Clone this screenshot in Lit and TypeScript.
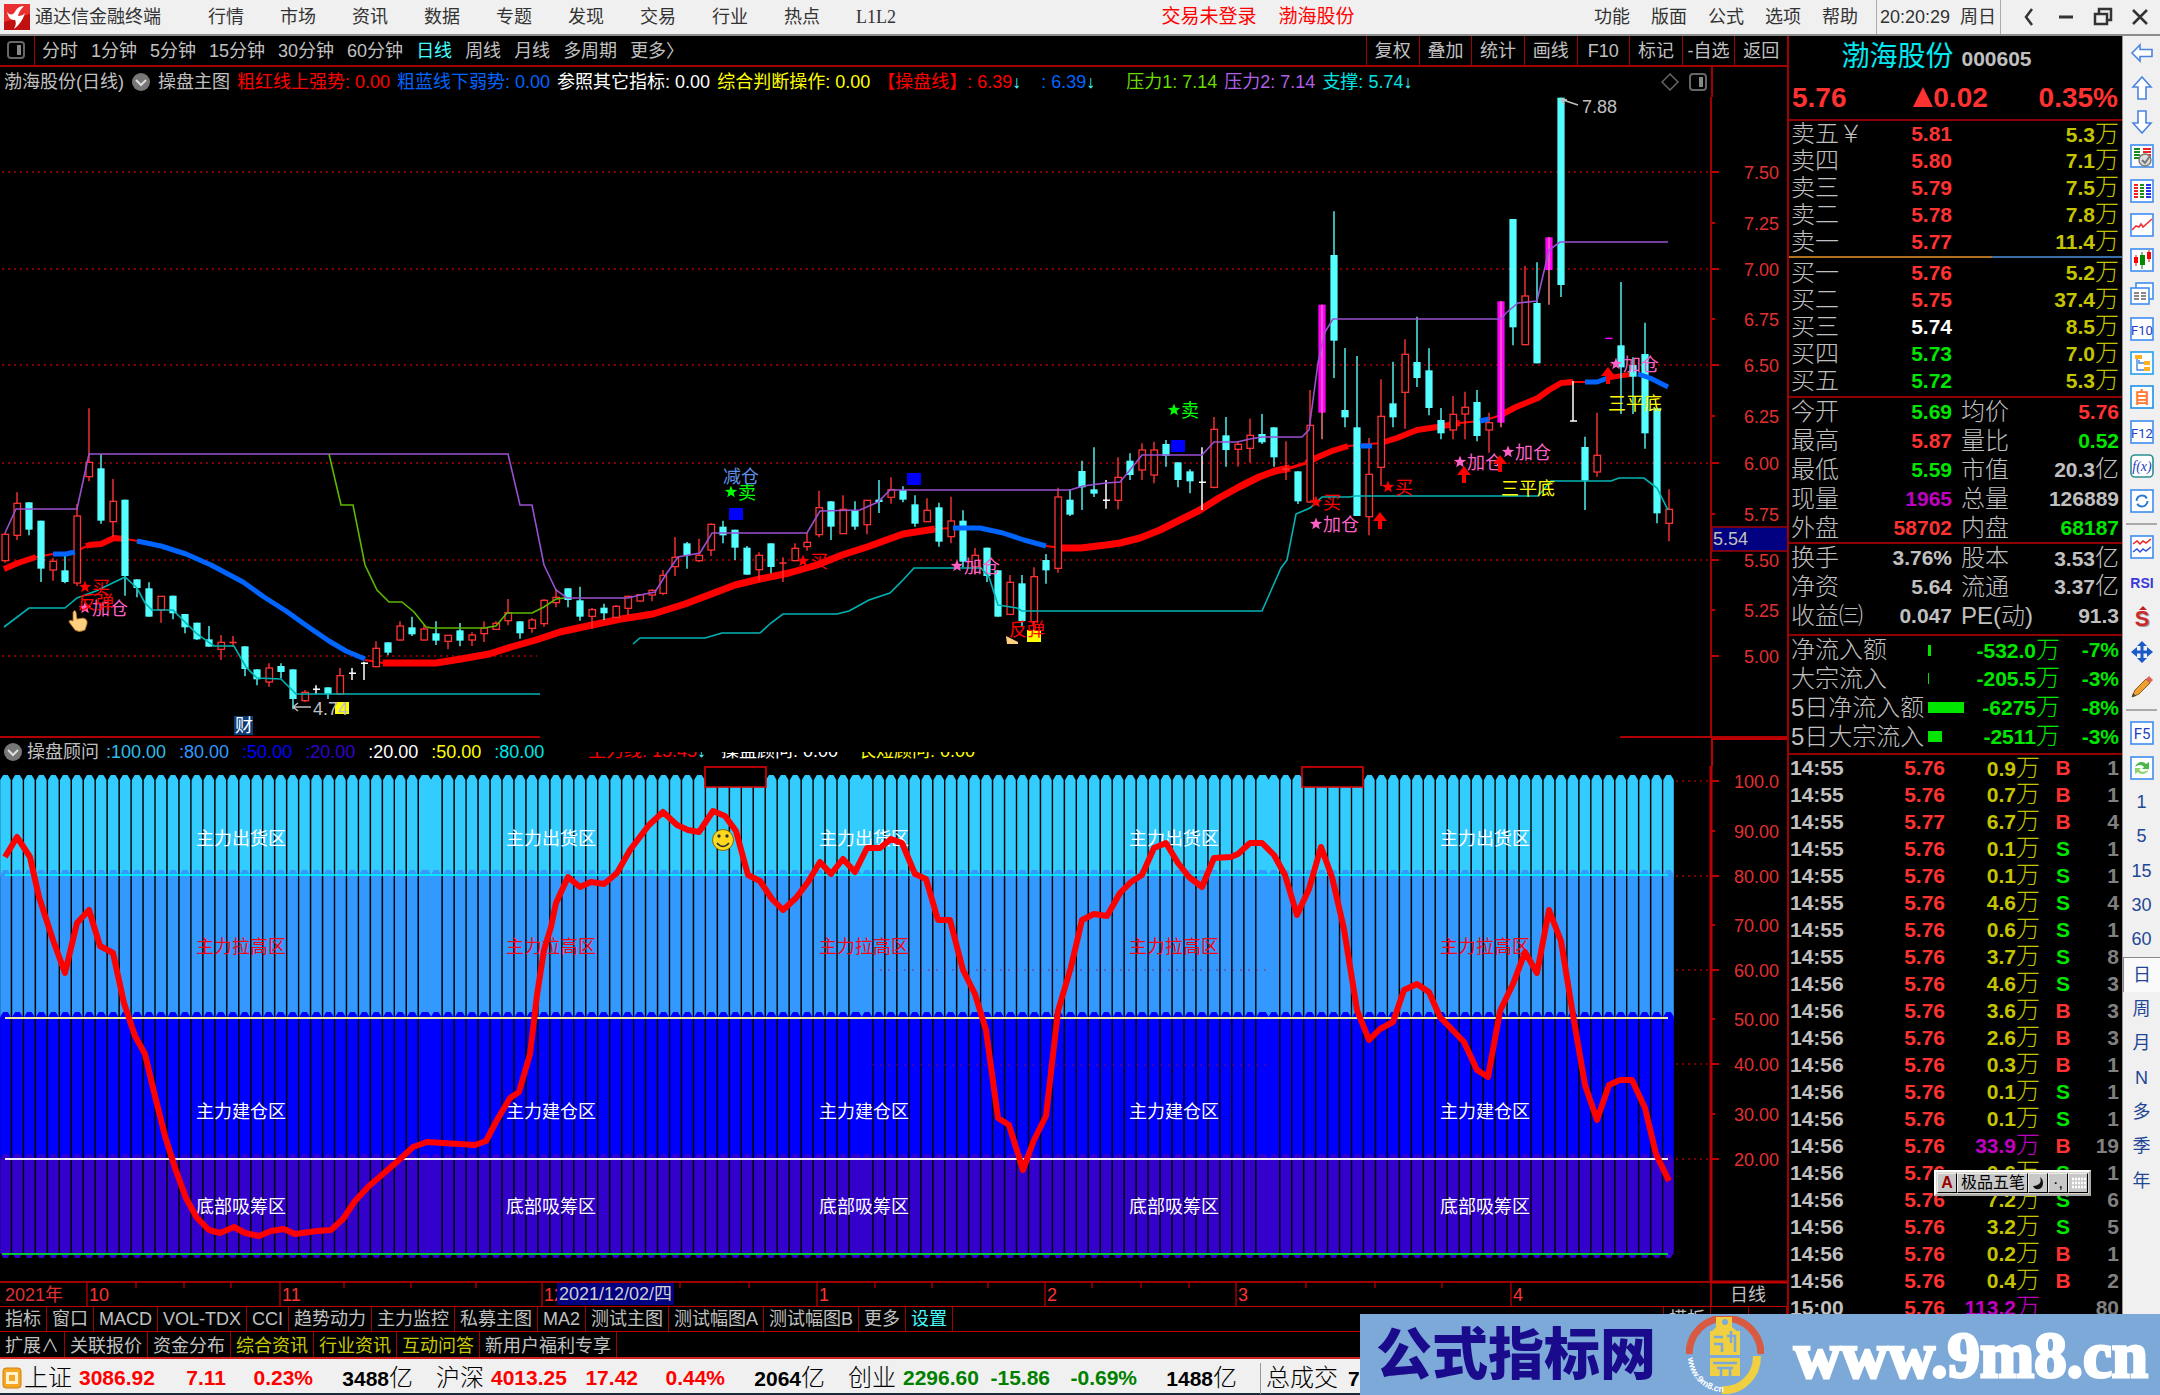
import { LitElement, html, svg, css, nothing } from "lit";
import { customElement, state } from "lit/decorators.js";
import { classMap } from "lit/directives/class-map.js";
import { styleMap } from "lit/directives/style-map.js";

type Bar = [kind: string, open: number, close: number, high: number, low: number];

const BAR0 = 5.4;
const PITCH = 11.965;
const barX = (i: number) => BAR0 + i * PITCH;

/** Parses "kind open close high low; ..." rows; values are thirds of a unit below `top`. */
function parseBars(top: number, text: string): Bar[] {
  return text.split(";").map((row) => {
    const [kind, ...rest] = row.trim().split(" ");
    const n = rest.map((v) => top + Number(v) / 3);
    return [kind, n[0], n[1], n[2], n[3]] as Bar;
  });
}

const BARS: Bar[] = [
  ...parseBars(380, `r 463 542 458 548;r 370 466 337 480;c 367 449 367 466;c 422 566 422 606;r 544 570 534 602;c 571 606 526 610;
    r 408 609 372 618;r 247 290 85 304;c 265 422 222 431;r 364 425 297 470;c 359 588 359 647;c 598 624 598 652;c 625 710 607 710;
    r 649 690 649 728;c 647 700 647 718;c 702 742 702 760;c 728 778 728 780;c 778 800 738 800;r 787 808 765 840;x 785 790 768 800;
    c 799 867 799 889;c 868 898 868 916;r 864 906 850 920;c 858 876 850 895;c 868 957 868 988;r 937 962 930 966;w 928 928 916 942;
    c 922 942 922 957;r 887 942 864 942;w 880 880 864 900;w 850 850 845 900;r 805 860 784 862;c 787 818 787 826;r 738 780 724 782;
    c 742 763 710 768;r 747 780 735 782;c 760 782 724 795;r 766 784 766 808;c 751 782 729 799;r 765 780 757 798;r 744 761 724 786;
    r 730 748 724 750;r 698 722 657 736;c 724 760 724 776;r 720 745 714 758;r 661 731 657 740;r 652 668 626 682`),
  ...parseBars(400, `c 565 600 565 622;c 601 650 560 662;r 629 649 624 686;c 623 640 611 660;r 619 652 615 654;r 589 625 587 645;
    r 584 603 582 605;r 571 585 568 604;r 526 580 510 586;r 472 500 411 528;c 430 466 426 506;r 466 482 416 486;r 373 450 370 468;
    c 380 406 362 430;c 389 443 389 480;c 443 524 438 524;r 466 509 457 542;c 430 501 430 520;x 487 490 472 546;r 445 482 430 484;
    r 427 440 398 452;r 323 404 272 412;c 304 380 304 420;r 328 401 286 402;c 331 380 304 389;r 301 374 300 403;c 299 306 240 339;
    r 269 292 232 311;c 270 299 259 307;c 313 371 286 380;r 331 365 295 366;c 322 425 308 440;r 363 410 290 430;c 362 485 331 502;
    r 466 500 444 522;c 443 528 443 546;c 511 650 511 650;r 547 643 525 646;c 550 663 525 680;r 530 665 502 700;c 480 511 462 551;
    r 291 505 263 518;c 299 344 268 348;c 213 262 182 330;c 268 281 142 291;w 301 301 240 326;r 232 301 172 328;c 182 225 160 240;
    r 150 210 130 240;r 150 225 125 250`),
  ...parseBars(80, `c 1092 1128 1080 1160;c 1147 1200 1147 1222;c 1174 1204 1168 1240;w 1207 1207 1102 1290;r 1048 1222 1011 1225;
    c 1066 1110 1011 1160;r 1093 1108 1086 1160;r 1066 1105 1016 1148;c 1062 1087 1002 1092;c 1042 1132 1042 1160;x 1165 1170 1084 1200;
    c 1174 1264 1174 1272;r 1036 1266 930 1268;m 674 998 674 1078;c 525 782 394 894;c 990 1012 804 1042;c 1042 1308 828 1308;
    r 1183 1310 1074 1366;r 1009 1162 898 1218;c 970 1012 845 1042;r 823 937 778 1046;c 846 894 710 921;c 871 984 805 1006;
    c 1020 1060 984 1078;r 1003 1050 948 1078;r 982 1002 935 1078;c 966 1068 930 1084;r 1028 1050 998 1118;m 664 1028 664 1042;
    c 417 742 417 796;r 648 794 558 796;c 669 850 547 850;m 472 570 472 674;c 53 615 53 651;w 1023 1023 903 1023;c 1101 1202 1070 1290;
    r 1126 1176 998 1190;m 773 777 773 777;c 796 862 606 1002;c 855 890 832 1002;c 822 1060 728 1106;c 985 1300 985 1330;
    r 1288 1330 1228 1384`),
];

const AVG: { c: string; w: number; d: string }[] = [
  { c: "red", w: 6, d: "4,569 18,563 36,557" },
  { c: "red", w: 2, d: "36,557 53,554 75,552 89,545" },
  { c: "#0064ff", w: 5, d: "53,554 66,554 75,552" },
  { c: "red", w: 6, d: "86,546 89,545 101,544 114,538 125,539" },
  { c: "red", w: 2, d: "125,539 138,541" },
  { c: "#0064ff", w: 5, d: "137,541 161,546 186,554 211,565 243,582 264,597 286,611 307,626 329,641 346,651 365,659" },
  { c: "red", w: 2, d: "365,660 383,663" },
  { c: "red", w: 7, d: "383,663 436,663 461,659 489,654 511,647 536,640 560,632 592,625 621,619 653,614 685,604 714,593 735,585 760,579 789,573 817,565 842,555 867,547 903,534 935,529" },
  { c: "red", w: 2, d: "935,529 953,528" },
  { c: "#0064ff", w: 5, d: "953,528 980,528 1003,533 1024,540 1046,546" },
  { c: "red", w: 2, d: "1046,546 1062,548" },
  { c: "red", w: 7, d: "1062,548 1081,548 1106,545 1120,543 1140,538 1160,530 1180,520 1200,510 1219,498 1239,487 1259,477 1275,471 1290,468" },
  { c: "red", w: 3, d: "1290,468 1306,463" },
  { c: "red", w: 6, d: "1306,463 1318,457 1332,451 1348,446" },
  { c: "red", w: 2, d: "1348,446 1381,443" },
  { c: "#0064ff", w: 5, d: "1360,446 1372,446" },
  { c: "red", w: 6, d: "1381,443 1397,438 1417,430 1437,427 1460,423" },
  { c: "red", w: 2, d: "1460,423 1480,421 1489,419 1501,415" },
  { c: "#0064ff", w: 5, d: "1480,421 1489,419" },
  { c: "red", w: 6, d: "1501,415 1516,407 1538,398 1549,390 1561,383 1573,382" },
  { c: "red", w: 2, d: "1573,382 1585,382" },
  { c: "#0064ff", w: 5, d: "1585,382 1597,382 1608,378" },
  { c: "red", w: 5, d: "1608,378 1619,376 1634,374" },
  { c: "#0064ff", w: 5, d: "1638,374 1650,378 1660,383 1668,387" },
];

const PRESS2 =
  "5,533 16,509 77,509 89,454 508,454 520,505 532,505 544,565 556,590 567,598 628,598 640,595 655,592 667,573 678,557 700,553 712,533 807,533 820,511 860,510 878,502 890,490 1070,490 1083,486 1106,483 1120,482 1130,470 1142,455 1202,455 1214,442 1237,442 1250,439 1262,437 1302,437 1309,430 1318,363 1325,332 1333,319 1501,319 1506,313 1518,303 1537,301 1549,250 1560,242 1668,242";
const PRESS1 =
  "329,454 341,505 353,505 365,565 377,590 389,602 402,602 414,612 426,627 432,628 484,628 496,626 507,613 532,613 544,607 556,599 564,598";
const SUPPORT = [
  "4,627 29,608 65,608 77,598 96,591 125,577 137,588 145,603 152,610 173,610 186,623 197,634 214,646 234,646 246,667 257,678 281,679 296,694 540,694",
  "633,644 640,638 705,638 722,633 760,633 771,623 783,614 837,614 849,611 869,600 890,593 903,580 914,568 981,568 989,577 998,605 1017,608 1022,611 1262,611 1281,568 1287,560 1296,514 1310,508 1322,497 1350,497 1354,496 1538,496 1551,481 1611,481 1619,478 1644,478 1657,488 1668,510",
];

const OSC =
  "5,857 17,837 30,857 39,897 53,940 65,973 77,923 89,910 100,946 113,953 124,1003 135,1036 145,1054 154,1092 165,1136 175,1168 186,1198 197,1218 209,1230 220,1233 234,1227 245,1233 259,1236 271,1231 284,1229 295,1234 317,1231 331,1230 343,1219 355,1201 369,1186 383,1174 399,1160 413,1147 427,1142 475,1145 486,1141 497,1120 510,1098 519,1092 530,1054 537,995 544,950 551,927 556,903 568,877 580,887 591,882 604,884 617,873 630,850 649,825 663,812 677,825 688,830 699,832 713,811 725,816 736,831 748,875 760,881 772,899 783,910 796,898 808,882 820,862 831,874 843,859 855,872 867,848 880,848 891,839 902,843 915,874 926,879 938,920 950,920 963,970 975,994 986,1030 998,1118 1009,1125 1023,1170 1034,1140 1046,1116 1058,1011 1071,967 1082,920 1094,914 1107,916 1120,893 1131,882 1142,875 1154,848 1166,843 1178,863 1189,877 1202,887 1214,858 1231,857 1238,854 1250,843 1262,843 1274,855 1285,875 1297,915 1309,889 1321,847 1332,877 1344,929 1357,1010 1369,1040 1380,1029 1393,1022 1404,990 1417,984 1429,992 1440,1017 1464,1042 1477,1070 1488,1077 1500,1011 1513,984 1525,952 1537,973 1549,910 1561,941 1573,1015 1585,1085 1597,1120 1609,1085 1620,1080 1632,1080 1645,1108 1656,1154 1669,1181";

/* x, y, colour, label */
const MARKS: [number, number, string, string][] = [
  [85, 587, "red", "买"],
  [85, 608, "#ff60c8", "加仓"],
  [731, 492, "#00ff00", "卖"],
  [803, 561, "red", "买"],
  [957, 566, "#ff60c8", "加仓"],
  [1174, 410, "#00ff00", "卖"],
  [1316, 502, "red", "买"],
  [1388, 487, "red", "买"],
  [1316, 524, "#ff60c8", "加仓"],
  [1460, 462, "#ff60c8", "加仓"],
  [1508, 452, "#ff60c8", "加仓"],
  [1616, 364, "#ff60c8", "加仓"],
];

const NOTES: [number, number, string, string][] = [
  [78, 602, "red", "反弹"],
  [723, 476, "#6090e8", "减仓"],
  [1009, 629, "red", "反弹"],
  [1608, 403, "#ffff00", "三平底"],
  [1501, 488, "#ffff00", "三平底"],
  [1582, 106, "#c0c0c0", "7.88"],
];

const MENU = ["行情", "市场", "资讯", "数据", "专题", "发现", "交易", "行业", "热点", "L1L2"];
const MENU_R = ["功能", "版面", "公式", "选项", "帮助"];
const PERIODS = ["分时", "1分钟", "5分钟", "15分钟", "30分钟", "60分钟", "日线", "周线", "月线", "多周期", "更多〉"];
const TOOLS = ["复权", "叠加", "统计", "画线", "F10", "标记", "-自选", "返回"];
const INDICATORS = ["指标", "窗口", "MACD", "VOL-TDX", "CCI", "趋势动力", "主力监控", "私募主图", "MA2", "测试主图", "测试幅图A", "测试幅图B", "更多", "设置"];
const EXTRAS: [string, boolean][] = [
  ["扩展∧", false], ["关联报价", false], ["资金分布", false], ["综合资讯", true], ["行业资讯", true], ["互动问答", true], ["新用户福利专享", false],
];

const ASKS: [string, string, string, string][] = [
  ["卖五￥", "5.81", "up", "5.3"], ["卖四", "5.80", "up", "7.1"], ["卖三", "5.79", "up", "7.5"], ["卖二", "5.78", "up", "7.8"], ["卖一", "5.77", "up", "11.4"],
];
const BIDS: [string, string, string, string][] = [
  ["买一", "5.76", "up", "5.2"], ["买二", "5.75", "up", "37.4"], ["买三", "5.74", "flat", "8.5"], ["买四", "5.73", "down", "7.0"], ["买五", "5.72", "down", "5.3"],
];
const STATS1: string[][] = [
  ["今开", "5.69", "down", "均价", "5.76", "up"],
  ["最高", "5.87", "up", "量比", "0.52", "down"],
  ["最低", "5.59", "down", "市值", "20.3亿", ""],
  ["现量", "1965", "big", "总量", "126889", ""],
  ["外盘", "58702", "up", "内盘", "68187", "down"],
];
const STATS2: string[][] = [
  ["换手", "3.76%", "", "股本", "3.53亿", ""],
  ["净资", "5.64", "", "流通", "3.37亿", ""],
  ["收益㈢", "0.047", "", "PE(动)", "91.3", ""],
];
const FLOWS: [string, number, string, string][] = [
  ["净流入额", 3, "-532.0", "-7%"],
  ["大宗流入", 1, "-205.5", "-3%"],
  ["5日净流入额", 36, "-6275", "-8%"],
  ["5日大宗流入", 14, "-2511", "-3%"],
];
const TICKS = `14:55 5.76 0.9 B 1;14:55 5.76 0.7 B 1;14:55 5.77 6.7 B 4;14:55 5.76 0.1 S 1;14:55 5.76 0.1 S 1;14:55 5.76 4.6 S 4;14:55 5.76 0.6 S 1;14:55 5.76 3.7 S 8;14:56 5.76 4.6 S 3;14:56 5.76 3.6 B 3;14:56 5.76 2.6 B 3;14:56 5.76 0.3 B 1;14:56 5.76 0.1 S 1;14:56 5.76 0.1 S 1;14:56 5.76 33.9 B 19;14:56 5.76 0.6 S 1;14:56 5.76 7.2 S 6;14:56 5.76 3.2 S 5;14:56 5.76 0.2 B 1;14:56 5.76 0.4 B 2;15:00 5.76 113.2 - 80`
  .split(";")
  .map((r) => r.split(" "));

const INDEXES: [string, string, string, string, string, string][] = [
  ["上证", "3086.92", "7.11", "0.23%", "3488", "rise"],
  ["沪深", "4013.25", "17.42", "0.44%", "2064", "rise"],
  ["创业", "2296.60", "-15.86", "-0.69%", "1488", "fall"],
];

/** Sets Chinese units in the larger, lighter face beside bold figures. */
const unit = (s: string) =>
  s.split(/([\u4e00-\u9fff]+)/).filter(Boolean).map((p) => (/[\u4e00-\u9fff]/.test(p) ? html`<span class="cn">${p}</span>` : p));

const star = (x: number, y: number, r: number) => {
  const pts: string[] = [];
  for (let k = 0; k < 10; k++) {
    const a = (Math.PI / 5) * k - Math.PI / 2;
    const q = k % 2 ? r * 0.42 : r;
    pts.push(`${(x + q * Math.cos(a)).toFixed(1)},${(y + q * Math.sin(a)).toFixed(1)}`);
  }
  return pts.join(" ");
};

const frame = (inner: unknown, stroke = "#3f8cf0", rx = 0) =>
  svg`<rect x="1" y="1" width="22" height="22" rx=${rx} fill="#fff" stroke=${stroke} stroke-width="1.600"/>${inner}`;
const fkey = (a: string) =>
  frame(svg`<text x="12" y="18" text-anchor="middle" font-size=${a.length > 2 ? 13 : 15} font-weight="400" font-family="Roboto, sans-serif" fill="#2040c8">${a}</text>`);
const dashes = (x: number, w: number, c: string, ys: number[]) =>
  ys.map((y) => svg`<rect x=${x} y=${y} width=${w} height="2" fill=${c}/>`);

const ICONS: [string, unknown][] = [
  ["后退", svg`<path d="M2 12 L10 4 V8.500 H22 V15.500 H10 V20 Z" fill="#fff" stroke="#4a84e0" stroke-width="1.600"/>`],
  ["上移", svg`<path d="M12 1 L21 11 H16 V23 H8 V11 H3 Z" fill="#fff" stroke="#4a84e0" stroke-width="1.600"/>`],
  ["下移", svg`<path d="M12 23 L21 13 H16 V1 H8 V13 H3 Z" fill="#fff" stroke="#4a84e0" stroke-width="1.600"/>`],
  ["自选切换", frame(svg`${dashes(4, 6, "#1a8a1a", [4, 7, 10, 13])}${dashes(13, 8, "#f02020", [4, 7, 10])}<circle cx="15" cy="16" r="6" fill="#ddd" stroke="#777" stroke-width="1.400"/><path d="M12 16 l3 3 l5 -7" fill="none" stroke="#777" stroke-width="2"/>`)],
  ["报价", frame(svg`${dashes(4, 4, "#f02020", [5, 8, 11, 14, 17])}${dashes(10, 4, "#1a8a1a", [5, 8, 11, 14, 17])}${dashes(16, 5, "#2030f0", [5, 8, 11, 14, 17])}`)],
  ["走势", frame(svg`<path d="M2 17 L6 13 L9 14 L11 11 L13 14 L22 6" fill="none" stroke="#f03030" stroke-width="1.600"/>`)],
  ["K线", frame(svg`<path d="M6 7v11M19 2v12" stroke="#e01010"/><path d="M12 4v17" stroke="#107010"/><rect x="4" y="9" width="4" height="6" fill="#f00"/><rect x="10" y="7" width="5" height="10" fill="#080"/><rect x="17" y="4" width="4" height="7" fill="#f00"/>`)],
  ["多窗", svg`<rect x="6" y="1" width="17" height="16" fill="#fff" stroke="#3f8cf0" stroke-width="1.600"/><rect x="1" y="6" width="18" height="16" fill="#fff" stroke="#3f8cf0" stroke-width="1.600"/>${dashes(4, 5, "#888", [10, 13, 16])}${dashes(11, 5, "#888", [10, 13, 16])}`],
  ["基本资料", fkey("F10")],
  ["树形", frame(svg`<path d="M7 7V19H14M9 9V12H14" fill="none" stroke="#4a84e0" stroke-width="1.400"/><rect x="5" y="4" width="7" height="4" fill="#ffb020"/><rect x="14" y="10" width="6" height="4" fill="#ffb020"/><rect x="14" y="16" width="6" height="4" fill="#ffb020"/>`, "#1fa0f0")],
  ["自选股", frame(svg`<text x="12" y="18" text-anchor="middle" font-size="16" font-weight="700" fill="#ff7a33">自</text>`, "#1f90e8")],
  ["交易", fkey("F12")],
  ["公式", frame(svg`<text x="12" y="17" text-anchor="middle" font-size="14" font-style="italic" font-family="Liberation Serif, serif" fill="#2040c0">f(x)</text>`, "#2a9090", 4)],
  ["刷新", frame(svg`<circle cx="12" cy="12" r="5.500" fill="none" stroke="#2a7ad0" stroke-width="2" stroke-dasharray="14 3"/>`)],
];
const ICONS2: [string, unknown][] = [
  ["对比", frame(svg`<path d="M3 9l4-3 3 3 3-3 3 2 5-4" fill="none" stroke="#f02020" stroke-width="1.500"/><path d="M3 17l4-3 3 3 3-3 3 2 5-4" fill="none" stroke="#3050e0" stroke-width="1.500"/>`)],
  ["RSI", svg`<text x="12" y="18" text-anchor="middle" font-size="14" font-weight="700" font-family="Liberation Sans, sans-serif" fill="#3a3ad8">RSI</text>`],
  ["资金", svg`<path d="M13 1l4 4h-8z" fill="#c02020"/><text x="13" y="22" text-anchor="middle" font-size="22" font-weight="700" font-family="Liberation Sans, sans-serif" fill="#999">S</text><text x="12" y="21" text-anchor="middle" font-size="22" font-weight="700" font-family="Liberation Sans, sans-serif" fill="#cc2a2a">S</text>`],
  ["移动", svg`<path d="M12 1l5 5H7zM12 23l5-5H7zM1 12l6-5v10zM23 12l-6-5v10z" fill="#1a5ac8"/><path d="M12 6v12M6 12h12" stroke="#1a5ac8" stroke-width="3"/>`],
  ["画笔", svg`<path d="M2 22l3-7L16 4l4 4L9 19z" fill="#f0a030" stroke="#8a5a20"/><path d="M16 4l3-3 4 4-3 3z" fill="#e06060"/><path d="M2 22l1-4 3 3z" fill="#443"/>`],
];
const ICONS3: [string, unknown][] = [
  ["F5", fkey("F5")],
  ["更新", frame(svg`<path d="M5 11c2-6 9-6 11-3l3-2v7h-7l2-2c-3-3-6-2-9 0z" fill="#4cb84c"/><path d="M19 13c-2 6-9 6-11 3l-3 2v-6h6l-2 2c3 3 7 2 10-1z" fill="#8cd46c"/>`)],
];
const SCALES = ["1", "5", "15", "30", "60", "日", "周", "月", "N", "多", "季", "年"];

@customElement("app-root")
export class AppRoot extends LitElement {
  @state() private period = "日线";
  @state() private scale = "日";

  static styles = css`
    :host { display: block; background: #000; color: #c0c0c0; font: 400 18px/24px "Liberation Sans", "Noto Sans CJK SC", sans-serif; }
    * { box-sizing: border-box; }
    button { font: inherit; color: inherit; background: none; border: 0; padding: 0; margin: 0; white-space: nowrap; cursor: pointer; }
    a { color: inherit; text-decoration: none; }
    h1, p { margin: 0; font: inherit; }
    svg { display: block; }
    .page { position: relative; overflow: hidden; }
    .menubar { display: flex; align-items: center; height: 36px; background: #f0f0f0; color: #333; border-bottom: 2px solid #8c8c8c; padding: 0 8px 0 4px; }
    .logo { width: 26px; height: 26px; margin-right: 5px; }
    .menu { display: flex; gap: 36px; margin-left: 47px; }
    .serif { font-family: "Liberation Serif", serif; }
    .login { display: flex; gap: 22px; margin-left: auto; padding-left: 26px; color: #f00; font-size: 19px; }
    .menu.right { gap: 21px; margin-left: auto; padding-right: 18px; }
    .clock { display: flex; gap: 10px; padding: 5px 4px 5px 3px; border: solid #aaa; border-width: 0 1px; }
    .win { display: flex; gap: 13px; margin-left: 16px; }
    .win svg { width: 24px; height: 24px; }

    .body { display: grid; grid-template-columns: minmax(0, 1fr) 336px 37px; }
    .row { display: flex; align-items: center; }
    .periods { height: 31px; border-bottom: 2px solid #a00000; padding-left: 4px; }
    .panel-icon { width: 31px; height: 29px; border-right: 1px solid #a00000; padding: 4px 0 0 3px; margin-right: 7px; }
    .items { display: flex; gap: 13px; }
    .on { color: #4ff; }
    .tools { display: grid; grid-template-columns: repeat(8, 1fr); width: 421px; margin-left: auto; height: 29px; }
    .tools button { border-left: 1px solid #a00000; }
    .legend { height: 30px; padding-left: 4px; white-space: nowrap; }
    .legend .items { gap: 7px; align-items: center; }
    .legend .far { margin: 0 24px 0 8px; }
    .corner { width: 76px; height: 30px; border-left: 2px solid #a00000; }
    .corner.thick { height: 28px; border-top: 2px solid #c00000; border-left-color: #c00000; }
    .sublegend { height: 28px; padding-left: 3px; white-space: nowrap; }
    .sublegend .title { margin: 0 7px 0 4px; }
    .cut { width: 547px; overflow: hidden; display: flex; align-items: center; }
    .half { height: 10px; overflow: hidden; display: flex; align-items: flex-end; gap: 15px; line-height: 22px; margin: 10px 0 0 38px; }
    .push { margin-left: auto; }
    .red { color: #f00; } .blue { color: #0064ff; } .white { color: #fff; } .yellow { color: #ff0; }
    .green { color: #6bdc00; } .purple { color: #b060e8; } .cyan { color: #00e4e4; }
    .arrow { color: #4ff; }
    .z1 { color: #30bce8; } .z2 { color: #3399ff; } .z3 { color: #0000ff; } .z4 { color: #3300cc; }
    .chart { width: 100%; height: auto; }
    .chart text { font-size: 18px; }
    .tabs { display: flex; height: 25px; border-top: 1px solid #c00000; }
    .tabs.second { height: 28px; border-bottom: 2px solid #d02020; }
    .tabs button { padding: 0 5px; border-right: 1px solid #a00000; }
    .tabs.second button { padding-top: 2px; }
    .tabs .end { margin-left: auto; border-left: 1px solid #a00000; }
    .tabs .pm { width: 38px; }
    .tip { color: #c8c800; }

    .quote { border-left: 2px solid #a00000; border-right: 1px solid #999; font-weight: 700; font-size: 21px; overflow: hidden; height: 1323px; }
    .name { display: flex; justify-content: center; align-items: baseline; gap: 8px; line-height: 38px; padding: 2px 38px 0 0; }
    .name h1 { font-size: 28px; color: #00e8f0; font-weight: 400; }
    .price { display: flex; justify-content: space-between; align-items: center; font-size: 28px; line-height: 36px; padding: 2px 4px 3px 3px; color: #ff3232; }
    .price .change { padding-left: 16px; }
    .price svg { display: inline-block; }
    table { width: 100%; border-collapse: collapse; table-layout: fixed; border-top: 2px solid #900000; }
    th, td { padding: 0; text-align: right; line-height: 20px; white-space: nowrap; font-weight: 700; }
    th { text-align: left; font-weight: 300; font-size: 24px; }
    .cn { font-weight: 300; font-size: 24px; }
    .book tr { height: 27px; }
    .stat tr, .flow tr { height: 29px; }
    .tick tr { height: 27px; }
    .book th, .stat th, .flow th { padding-left: 2px; }
    .bids { border-top: 0; }
    .split { height: 2px; margin: 1px 0; background: linear-gradient(90deg, #b07020 61%, #3a6ea8 61%); }
    .book td:last-child, .stat td:last-child, .flow td:last-child, .tick td:last-child { padding-right: 3px; }
    .stat th + td + th { padding-left: 9px; }
    .gap { height: 2px; }
    .vol { color: #c4c400; } .up { color: #ff3232; } .flat { color: #fff; } .down { color: #00e600; } .big { color: #c000c0; }
    .dim { color: #808080; }
    .mid { text-align: center; }
    .tick td:first-child { text-align: left; padding-left: 1px; }
    .gap.wide { height: 4px; }
    .bar { display: block; height: 11px; background: #00e600; }

    .side { background: #f0f0f0; color: #1f4696; }
    .grp { display: flex; flex-direction: column; }
    .grp button { flex: 1; display: flex; align-items: center; justify-content: center; }
    .grp svg { width: 24px; height: 24px; }
    .g1 { height: 482px; } .g2 { height: 174px; } .g3 { height: 482px; }
    .sep { height: 2px; background: #aaa; margin: 5px 3px; }
    .sel { background: #fafafa; border: solid #888; border-width: 1px 0 0 1px; }

    .status { display: flex; align-items: center; height: 36px; background: #f0f0f0; color: #000; font-size: 21px; font-weight: 700; border-bottom: 2px solid #1a2a3a; padding: 4px 0 0 2px; }
    .status > svg { margin-right: 2px; }
    .idx { display: grid; grid-template-columns: 55px 76px 71px 87px 100px; margin-right: 23px; text-align: right; }
    .idx > :nth-child(1), .idx > :nth-child(2) { text-align: left; }
    .rise { color: #f00; } .fall { color: #008000; }
    .total { border-left: 1px solid #999; padding-left: 5px; display: flex; gap: 10px; line-height: 30px; }

    .banner { position: absolute; right: 0; bottom: 0; width: 800px; height: 81px; background: #7da9d8; display: flex; align-items: center; padding: 0 12px 0 16px; justify-content: space-between; }
    .banner .site { font-size: 56px; font-weight: 900; color: #1a0a8c; line-height: 80px; }
    .banner .url { font: 700 65px/80px "Liberation Serif", serif; color: #fff; -webkit-text-stroke: 3px #fff; }
    .ime { position: absolute; left: 1934px; top: 1170px; height: 26px; display: flex; background: #d8d4c8; border: 2px outset #fff; padding: 1px; color: #000; font-size: 16px; line-height: 18px; }
    .ime button { border: 1px outset #eee; border-right-color: #222; border-bottom-color: #222; background: #c8c8c8; padding: 0 3px; width: 20px; }
    .ime .wide { width: 71px; }
    .ime .a { color: #900; font-weight: 700; }
  `;

  private candle([k, a, b, hi, lo]: Bar, i: number) {
    const x = Math.round(barX(i));
    if (k === "w")
      return svg`<path d="M${x} ${hi}V${lo}M${x - 3} ${a}h7" stroke="#fff" stroke-width="1.500" fill="none"/>`;
    const c = k === "c" ? "#54ffff" : k === "m" ? "#ff00ff" : "#ff3232";
    if (k === "r")
      return svg`<path d="M${x} ${hi}V${a}M${x} ${b}V${lo}" stroke=${c} stroke-width="1.400"/><rect x=${x - 3} y=${a} width="6.500" height=${b - a} fill="#000" stroke=${c} stroke-width="1.300"/>`;
    return svg`<path d="M${x} ${hi}V${lo}" stroke=${k === "m" ? "#ff8080" : c} stroke-width="1.400"/><rect x=${x - 3.6} y=${a} width="7.200" height=${Math.max(b - a, 1.5)} fill=${c}/>${
      k === "m" && b - a > 5 ? svg`<path d="M${x} ${a}V${b}" stroke="#ff80a0" stroke-width="1.200"/>` : nothing}`;
  }

  private priceChart() {
    const majors: [number, string, boolean][] = [
      [172, "7.50", true], [223, "7.25", false], [269, "7.00", true], [319, "6.75", false], [365, "6.50", true], [416, "6.25", false],
      [463, "6.00", true], [514, "5.75", false], [560, "5.50", true], [610, "5.25", false], [656, "5.00", true],
    ];
    const ups: [number, number][] = [[1380, 512], [1464, 466], [1500, 455], [1608, 367]];
    return html`<svg class="chart" viewBox="0 97 1787 641" role="img" aria-label="K线图">
      ${majors.map(([y, label, big]) => svg`
        ${big ? svg`<path d="M2 ${y}H${y === 656 ? 537 : 1711}" stroke="#b00000" stroke-width="1.500" stroke-dasharray="2 4"/>` : nothing}
        <path d="M1711 ${y}h${big ? 8 : 4}" stroke="#c00000" stroke-width="2"/>
        <text x="1779" y=${y + 7} text-anchor="end" fill="#e03030">${label}</text>`)}
      <path d="M1711 97V738" stroke="#a00000" stroke-width="2"/>
      <path d="M0 737H540M1620 737H1787" stroke="#b00000" stroke-width="2"/>
      ${AVG.filter((s) => s.c === "red").map((s) => svg`<polyline points=${s.d} fill="none" stroke=${s.c} stroke-width=${s.w} stroke-linejoin="round"/>`)}
      ${BARS.map((b, i) => this.candle(b, i))}
      <polyline points=${PRESS2} fill="none" stroke="#9a50d0" stroke-width="1.600"/>
      <polyline points=${PRESS1} fill="none" stroke="#5cb800" stroke-width="1.600"/>
      ${SUPPORT.map((d) => svg`<polyline points=${d} fill="none" stroke="#00b4b4" stroke-width="1.600"/>`)}
      ${AVG.filter((s) => s.c !== "red").map((s) => svg`<polyline points=${s.d} fill="none" stroke=${s.c} stroke-width=${s.w} stroke-linejoin="round"/>`)}
      ${[[729, 508], [907, 473], [1171, 440]].map(([x, y]) => svg`<rect x=${x} y=${y} width="14" height="12" fill="#0000ff"/>`)}
      ${[[335, 702], [1027, 630]].map(([x, y]) => svg`<rect x=${x} y=${y} width="14" height="12" fill="#ffff00"/>`)}
      ${MARKS.map(([x, y, c, t]) => svg`<polygon points=${star(x, y, 6.5)} fill=${c}/><text x=${x + 7} y=${y + 7} fill=${c}>${t}</text>`)}
      ${NOTES.map(([x, y, c, t]) => svg`<text x=${x} y=${y + 7} fill=${c}>${t}</text>`)}
      ${ups.map(([x, y]) => svg`<path d="M${x} ${y}l7 9h-5v8h-4v-8h-5z" fill="#ff0000"/>`)}
      <path d="M1561 99l6 1M1561 99l3 5M1563 100l15 5" stroke="#c0c0c0" stroke-width="1.500" fill="none"/>
      <path d="M293 707h18M293 707l5-4M293 707l5 4" stroke="#c0c0c0" stroke-width="1.500" fill="none"/>
      <text x="313" y="715" fill="#c0c0c0">4.74</text>
      <rect x="234" y="716" width="19" height="19" fill="#0a3a78"/><text x="235" y="732" fill="#fff">财</text>
      <path d="M73 612q2-3 3 0l1 7 6-1q5 1 4 6l-2 6q-6 3-10 0l-6-8q0-3 4-1z" fill="#ffcf80" stroke="#a86a20" stroke-width="0.800"/>
      <path d="M1006 636l12 6v2h-11z" fill="#ffcf80"/>
      <rect x="1712" y="527" width="76" height="24" fill="#000080" stroke="#a00000" stroke-width="1.500"/>
      <text x="1713" y="545" fill="#c0c0c0">5.54</text>
    </svg>`;
  }

  private zoneChart() {
    const bands: [string, number, number][] = [["#33ccff", 775, 881], ["#3399ff", 870, 1023], ["#0000ff", 1012, 1165], ["#3300cc", 1154, 1258]];
    const paths = bands.map(([c, t, b]) => {
      let d = "";
      for (let i = 0; i < 140; i++) {
        const x = barX(i) - 5.2;
        const w = i === 35 || i === 71 || i === 105 ? 12.2 : 10.5;
        d += `M${x.toFixed(1)} ${b - 5}V${t + 5}q1-2 3-5h${(w - 6).toFixed(1)}q2 3 3 5V${b - 5}q-2 3-3 5h-${(w - 6).toFixed(1)}q-1-2-3-5z`;
      }
      return svg`<path d=${d} fill=${c}/>`;
    });
    const zones: [number, string, string][] = [[838, "主力出货区", "#fff"], [946, "主力拉高区", "#ff0010"], [1111, "主力建仓区", "#fff"], [1206, "底部吸筹区", "#fff"]];
    const axis: [number, string][] = [[781, "100.0"], [831, "90.00"], [876, "80.00"], [925, "70.00"], [970, "60.00"], [1019, "50.00"], [1064, "40.00"], [1114, "30.00"], [1159, "20.00"]];
    const months: [number, string][] = [[87, "10"], [280, "11"], [542, "12"], [817, "1"], [1045, "2"], [1236, "3"], [1511, "4"]];
    const minors = [136, 184, 231, 344, 411, 476, 680, 749, 875, 932, 988, 1092, 1141, 1189, 1306, 1375, 1442];
    return html`<svg class="chart" viewBox="0 766 1787 540" role="img" aria-label="操盘顾问">
      ${paths}
      <path d="M5 875H1668" stroke="#00ffff" stroke-width="1.600"/>
      <path d="M5 1018H1668" stroke="#e8e8a0" stroke-width="1.800"/>
      <path d="M5 1159H1668" stroke="#f0e8ff" stroke-width="1.800"/>
      <path d="M2 1254H1668" stroke="#00c832" stroke-width="2"/>
      <path d="M872 970H1270M872 1065H1270" stroke="#b00040" stroke-width="1" stroke-dasharray="2 6" opacity="0.700"/>
      ${[705, 1302].map((x) => svg`<rect x=${x} y="767" width="61" height="20" fill="#000" stroke="#e00000" stroke-width="1.600"/>`)}
      ${[196, 506, 819, 1129, 1440].map((x) => zones.map(([y, t, c]) => svg`<text x=${x} y=${y + 7} fill=${c}>${t}</text>`))}
      <polyline points=${OSC} fill="none" stroke="#ff0000" stroke-width="6" stroke-linejoin="round"/>
      <circle cx="723" cy="840" r="10.500" fill="#ffd820" stroke="#8a6a00"/>
      <circle cx="719" cy="836" r="1.700" fill="#333"/><circle cx="727" cy="836" r="1.700" fill="#333"/>
      <path d="M717 843q6 7 12 0" fill="none" stroke="#333" stroke-width="1.600"/>
      ${axis.map(([y, t], i) => svg`
        ${i % 2 === 0 ? svg`<path d="M1676 ${y}H1710" stroke="#a00000" stroke-width="1.500" stroke-dasharray="2 4"/>` : nothing}
        <path d="M1711 ${y}h${i % 2 ? 4 : 8}" stroke="#c00000" stroke-width="2"/>
        <text x="1779" y=${y + 7} text-anchor="end" fill="#e03030">${t}</text>`)}
      <path d="M1711 766V1282H1787" fill="none" stroke="#c00000" stroke-width="3"/>
      <path d="M0 1282H1711M1711 1282V1306" stroke="#a00000" stroke-width="2"/>
      ${minors.map((x) => svg`<path d="M${x} 1283v5" stroke="#a00000" stroke-width="1.500"/>`)}
      <text x="5" y="1301" fill="#e03030">2021年</text>
      ${months.map(([x, t]) => svg`<path d="M${x} 1282V1306" stroke="#a00000" stroke-width="1.500"/><text x=${x + 2} y="1301" fill="#ff3232">${t}</text>`)}
      <rect x="557" y="1283" width="117" height="22" fill="#000080"/>
      <text x="559" y="1300" fill="#d0d0d0">2021/12/02/四</text>
      <text x="1730" y="1301" fill="#c0c0c0">日线</text>
    </svg>`;
  }

  private chevron() {
    return html`<svg width="20" height="20" viewBox="0 0 20 20" aria-hidden="true"><circle cx="10" cy="10" r="9" fill="#777"/><path d="M5 8l5 5 5-5" fill="none" stroke="#ddd" stroke-width="2"/></svg>`;
  }

  private bookRows(rows: [string, string, string, string][]) {
    return rows.map(([n, p, c, v]) => html`<tr><th scope="row">${n}</th><td class=${c}>${p}</td><td class="vol">${v}<span class="cn">万</span></td></tr>`);
  }

  private statTable(rows: string[][]) {
    return html`<table class="stat"><colgroup><col style="width:77px"><col style="width:86px"><col style="width:76px"><col></colgroup><tbody>
      ${rows.map(([a, b, c, d, e, f]) => html`<tr><th scope="row">${a}</th><td class=${c}>${b}</td><th scope="row">${d}</th><td class=${f}>${unit(e)}</td></tr>`)}
    </tbody></table>`;
  }

  private iconButtons(list: [string, unknown][]) {
    return list.map(([t, g]) => html`<button aria-label=${t}><svg viewBox="0 0 24 24" aria-hidden="true">${g}</svg></button>`);
  }

  render() {
    return html`<div class="page">
      <header class="menubar">
        <svg class="logo" viewBox="0 0 26 26" aria-hidden="true"><rect width="26" height="26" fill="#e83030"/><path d="M0 18L26 10V26H0z" fill="#c01010"/><path d="M3 8q5 6 9-2 3-4 8-4-5 5-6 10 5 0 7-3-3 10-11 16 3-6 1-9-6 1-8-8z" fill="#fff"/></svg>
        <span>通达信金融终端</span>
        <nav class="menu">${MENU.map((m) => html`<button class=${classMap({ serif: m === "L1L2" })}>${m}</button>`)}</nav>
        <div class="login"><a href="#login">交易未登录</a><span>渤海股份</span></div>
        <nav class="menu right">${MENU_R.map((m) => html`<button>${m}</button>`)}</nav>
        <div class="clock"><span>20:20:29</span><span>周日</span></div>
        <div class="win">
          <button aria-label="返回"><svg viewBox="0 0 24 24"><path d="M15 4L9 12l6 8" fill="none" stroke="#333" stroke-width="2.500"/></svg></button>
          <button aria-label="最小化"><svg viewBox="0 0 24 24"><path d="M5 12h14" stroke="#333" stroke-width="3"/></svg></button>
          <button aria-label="还原"><svg viewBox="0 0 24 24"><path d="M8 8V4h12v11h-4M4 9h12v10H4z" fill="none" stroke="#333" stroke-width="2.500"/></svg></button>
          <button aria-label="关闭"><svg viewBox="0 0 24 24"><path d="M5 5l14 14M19 5L5 19" stroke="#333" stroke-width="2.500"/></svg></button>
        </div>
      </header>

      <div class="body">
        <main>
          <div class="row periods">
            <div class="panel-icon"><svg width="20" height="20" viewBox="0 0 20 20" aria-hidden="true"><rect x="1" y="2" width="16" height="16" rx="3" fill="none" stroke="#666" stroke-width="2"/><rect x="10" y="5" width="4" height="10" fill="#888"/></svg></div>
            <div class="items">${PERIODS.map((p) => html`<button class=${classMap({ on: p === this.period })} @click=${() => (this.period = p)}>${p}</button>`)}</div>
            <div class="tools">${TOOLS.map((t) => html`<button>${t}</button>`)}</div>
          </div>
          <div class="row legend">
            <div class="items">
              <span>渤海股份(日线)</span>${this.chevron()}<span>操盘主图</span>
              <span class="red">粗红线上强势: 0.00</span><span class="blue">粗蓝线下弱势: 0.00</span>
              <span class="white">参照其它指标: 0.00</span><span class="yellow">综合判断操作: 0.00</span>
              <span class="red">【操盘线】: 6.39<span class="arrow">↓</span></span>
              <span class="blue far">&nbsp;: 6.39<span class="arrow">↓</span></span>
              <span class="green">压力1: 7.14</span><span class="purple">压力2: 7.14</span><span class="cyan">支撑: 5.74<span class="arrow">↓</span></span>
            </div>
            <svg class="push" width="50" height="24" viewBox="0 0 50 24" aria-hidden="true"><path d="M9 4l8 8-8 8-8-8z" fill="none" stroke="#666" stroke-width="1.500"/><rect x="29" y="4" width="16" height="16" rx="3" fill="none" stroke="#666" stroke-width="2"/><rect x="38" y="7" width="4" height="10" fill="#888"/></svg>
            <div class="corner"></div>
          </div>
          ${this.priceChart()}
          <div class="row sublegend">
            <div class="cut">${this.chevron()}<span class="title">操盘顾问</span>
              <div class="items">
                <span class="z1">:100.00</span><span class="z2">:80.00</span><span class="z3">:50.00</span><span class="z4">:20.00</span>
                <span class="white">:20.00</span><span class="yellow">:50.00</span><span class="cyan">:80.00</span>
              </div>
            </div>
            <div class="half"><span class="red">主力线: 15.45<span class="arrow">↓</span></span><span class="white">操盘顾问: 0.00</span><span class="yellow">&nbsp;长短顾问: 0.00</span></div>
            <div class="corner thick push"></div>
          </div>
          ${this.zoneChart()}
          <div class="tabs">${INDICATORS.map((t) => html`<button class=${classMap({ on: t === "设置" })}>${t}</button>`)}<button class="end">模板</button><button class="pm">+</button><button class="pm">-</button></div>
          <div class="tabs second">${EXTRAS.map(([t, tip]) => html`<button class=${classMap({ tip })}>${t}</button>`)}</div>
        </main>

        <section class="quote">
          <div class="name"><h1>渤海股份</h1><span>000605</span></div>
          <div class="price"><span>5.76</span><span class="change"><svg width="20" height="20" viewBox="0 0 20 20" aria-hidden="true"><path d="M10 0l10 20H0z" fill="#ff3232"/></svg>0.02</span><span>0.35%</span></div>
          <table class="book"><colgroup><col style="width:77px"><col style="width:86px"><col></colgroup>
            <tbody>${this.bookRows(ASKS)}</tbody></table>
          <div class="split"></div>
          <table class="book bids"><colgroup><col style="width:77px"><col style="width:86px"><col></colgroup>
            <tbody>${this.bookRows(BIDS)}</tbody></table>
          <div class="gap"></div>
          ${this.statTable(STATS1)}
          ${this.statTable(STATS2)}
          <div class="gap wide"></div>
          <table class="flow"><colgroup><col style="width:139px"><col style="width:38px"><col><col style="width:62px"></colgroup><tbody>
            ${FLOWS.map(([n, w, v, p]) => html`<tr><th scope="row">${n}</th><td><span class="bar" style=${styleMap({ width: `${w}px` })}></span></td><td class="down">${v}<span class="cn">万</span></td><td class="down">${p}</td></tr>`)}
          </tbody></table>
          <div class="gap"></div>
          <table class="tick"><colgroup><col style="width:70px"><col style="width:86px"><col style="width:95px"><col style="width:46px"><col></colgroup><tbody>
            ${TICKS.map(([t, p, v, s, n]) => html`<tr><td>${t}</td><td class="up">${p}</td><td class=${Number(v) > 30 ? "big" : "vol"}>${v}<span class="cn">万</span></td><td class="mid ${s === "B" ? "up" : "down"}">${s === "-" ? "" : s}</td><td class="dim">${n}</td></tr>`)}
          </tbody></table>
        </section>

        <aside class="side">
          <div class="grp g1">${this.iconButtons(ICONS)}</div>
          <div class="sep"></div>
          <div class="grp g2">${this.iconButtons(ICONS2)}</div>
          <div class="sep"></div>
          <div class="grp g3">${this.iconButtons(ICONS3)}${SCALES.map((s) => html`<button class=${classMap({ sel: s === this.scale })} @click=${() => (this.scale = s)}>${s}</button>`)}</div>
        </aside>
      </div>

      <footer class="status">
        <svg width="20" height="22" viewBox="0 0 20 22" aria-hidden="true"><rect x="1" y="1" width="18" height="20" rx="3" fill="#f5a623" stroke="#d08010"/><rect x="4" y="5" width="12" height="12" fill="#fff3d0"/><rect x="7" y="8" width="6" height="6" fill="#f5a623"/></svg>
        ${INDEXES.map(([n, p, c, r, a, k]) => html`<div class="idx"><span class="cn">${n}</span><span class=${k}>${p}</span><span class=${k}>${c}</span><span class=${k}>${r}</span><span>${a}<span class="cn">亿</span></span></div>`)}
        <div class="total"><span class="cn">总成交</span><span>7638<span class="cn">亿</span></span></div>
      </footer>

      <div class="ime"><button class="a">A</button><button class="wide">极品五笔</button>
        <button aria-label="半角"><svg width="12" height="14" viewBox="0 0 12 14"><path d="M8 1q3 8-7 9 2 4 6 3 4-1 4-6 0-4-3-6z" fill="#111"/></svg></button>
        <button>·,</button>
        <button aria-label="软键盘"><svg width="14" height="14" viewBox="0 0 14 14"><path d="M0 3h14M0 7h14M0 11h14" stroke="#fff" stroke-width="2.500" stroke-dasharray="2 1"/></svg></button>
      </div>

      <div class="banner">
        <span class="site">公式指标网</span>
        <svg width="78" height="78" viewBox="0 0 78 78" aria-hidden="true">
          <path d="M3 38A36 36 0 0 1 75 38" fill="none" stroke="#d85a40" stroke-width="7"/>
          <path d="M71 40A32 34 0 0 1 36 74" fill="none" stroke="#f0d040" stroke-width="8"/>
          <path d="M30 1h16v10l6 5H25l5-5z" fill="#f0d040"/><circle cx="39" cy="6" r="3" fill="#7da9d8"/>
          <path d="M24 15h30v24H24zM24 42h30v18H24z" fill="#f0d040"/>
          <path d="M28 21h9M28 28h8v8M41 20h8v16M45 15v12M27 47h24M31 52h16M35 52v8M44 52v8" fill="none" stroke="#7da9d8" stroke-width="2.500"/>
          <path id="arc" d="M2 42A36 36 0 0 0 36 76" fill="none"/>
          <text font-size="9" font-weight="700" font-family="Liberation Sans, sans-serif" fill="#fff"><textPath href="#arc">www.9m8.cn</textPath></text>
        </svg>
        <span class="url">www.9m8.cn</span>
      </div>
    </div>`;
  }
}
